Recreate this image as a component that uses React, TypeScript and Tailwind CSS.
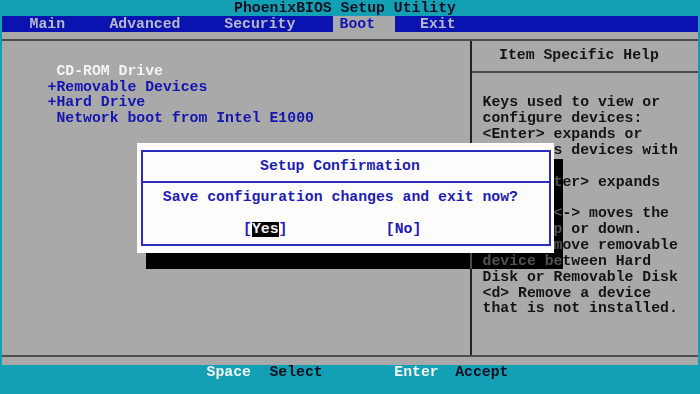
import React from 'react';

const bootItems = [
    { label: ' CD-ROM Drive', active: true },
    { label: '+Removable Devices', active: false },
    { label: '+Hard Drive', active: false },
    { label: ' Network boot from Intel E1000', active: false },
];

const helpLines = [
    'Keys used to view or',
    'configure devices:',
    '<Enter> expands or',
    'collapses devices with',
    'a + or -',
    '<Ctrl+Enter> expands',
    'all',
    '<+> and <-> moves the',
    'device up or down.',
    '<n> May move removable',
    'device between Hard',
    'Disk or Removable Disk',
    '<d> Remove a device',
    'that is not installed.',
];

const App: React.FC = () => {
    return (
        <div className="relative flex h-[394px] w-[700px] flex-col overflow-hidden bg-[#13a0b4] font-['Liberation_Mono','DejaVu_Sans_Mono',monospace] text-[14.8px] font-bold leading-[15.85px]">
            {/* title */}
            <div className="h-[16px] whitespace-pre pl-[234px] leading-[16px] text-[#101020]">PhoenixBIOS Setup Utility</div>

            {/* menu bar */}
            <div className="mx-[2px] flex h-[16px] bg-[#0a12b0] leading-[16px] text-[#b8b8cc]">
                <span className="ml-[27.5px]">Main</span>
                <span className="ml-[44.4px]">Advanced</span>
                <span className="ml-[43.8px]">Security</span>
                <span className="ml-[37.3px] w-[62px] bg-[#a9a9a9] pl-[7px] text-[#1414b0]">Boot</span>
                <span className="ml-[25.5px]">Exit</span>
            </div>

            {/* body */}
            <div className="mx-[2px] flex flex-1 flex-col bg-[#a9a9a9]">
                <div className="h-[7px]" />
                <div className="h-[2px] bg-[#4d4d4d]" />
                <div className="flex flex-1">
                    <div className="w-[468px] pl-[45.5px] pt-[22.7px]">
                        {bootItems.map((item) => (
                            <div key={item.label} className={`whitespace-pre ${item.active ? 'text-[#f4f4f4]' : 'text-[#1414b0]'}`}>
                                {item.label}
                            </div>
                        ))}
                    </div>
                    <div className="w-[2px] bg-[#222222]" />
                    <div className="flex-1 pt-[6.8px] text-[#141414]">
                        <div className="pl-[27px]">Item Specific Help</div>
                        <div className="mt-[7.4px] h-[2px] bg-[#4d4d4d]" />
                        <div className="mt-[22.4px] pl-[10.5px]">
                            {helpLines.map((line, i) => (
                                <div key={i} className="h-[15.85px] whitespace-pre">{line}</div>
                            ))}
                        </div>
                    </div>
                </div>
                <div className="h-[2px] bg-[#4d4d4d]" />
                <div className="h-[8px]" />
            </div>

            {/* key legend */}
            <div className="flex h-[29px] whitespace-pre">
                <span className="ml-[206.5px] text-[#f4f4f4]">Space</span>
                <span className="ml-[18.5px] text-[#101020]">Select</span>
                <span className="ml-[71.6px] text-[#f4f4f4]">Enter</span>
                <span className="ml-[16.5px] text-[#101020]">Accept</span>
            </div>

            {/* dialog shadow: darkens what is under it */}
            <div className="absolute left-[146px] top-[159px] h-[110px] w-[417px] bg-[#a9a9a9] mix-blend-difference" />
            <div className="absolute left-[146px] top-[159px] h-[110px] w-[417px] bg-[#8c8c8c] mix-blend-multiply" />

            {/* confirmation dialog */}
            <div className="absolute left-[137px] top-[143px] h-[110px] w-[417px] bg-[#fdfdfd] pb-[7px] pl-[4px] pr-[3px] pt-[7px] text-[#1c1cb4]">
                <div className="h-full border-2 border-[#2c2cc0]">
                    <div className="flex h-[29px] items-center pl-[117px]">Setup Confirmation</div>
                    <div className="h-[2px] bg-[#2c2cc0]" />
                    <div className="mt-[7px] pl-[19.8px]">Save configuration changes and exit now?</div>
                    <div className="mt-[15.7px] flex pl-[100px]">
                        <span>[</span>
                        <span className="bg-black text-[#f4f4f4]">Yes</span>
                        <span>]</span>
                        <span className="ml-[98.4px]">[No]</span>
                    </div>
                </div>
            </div>
        </div>
    );
};

export default App;
